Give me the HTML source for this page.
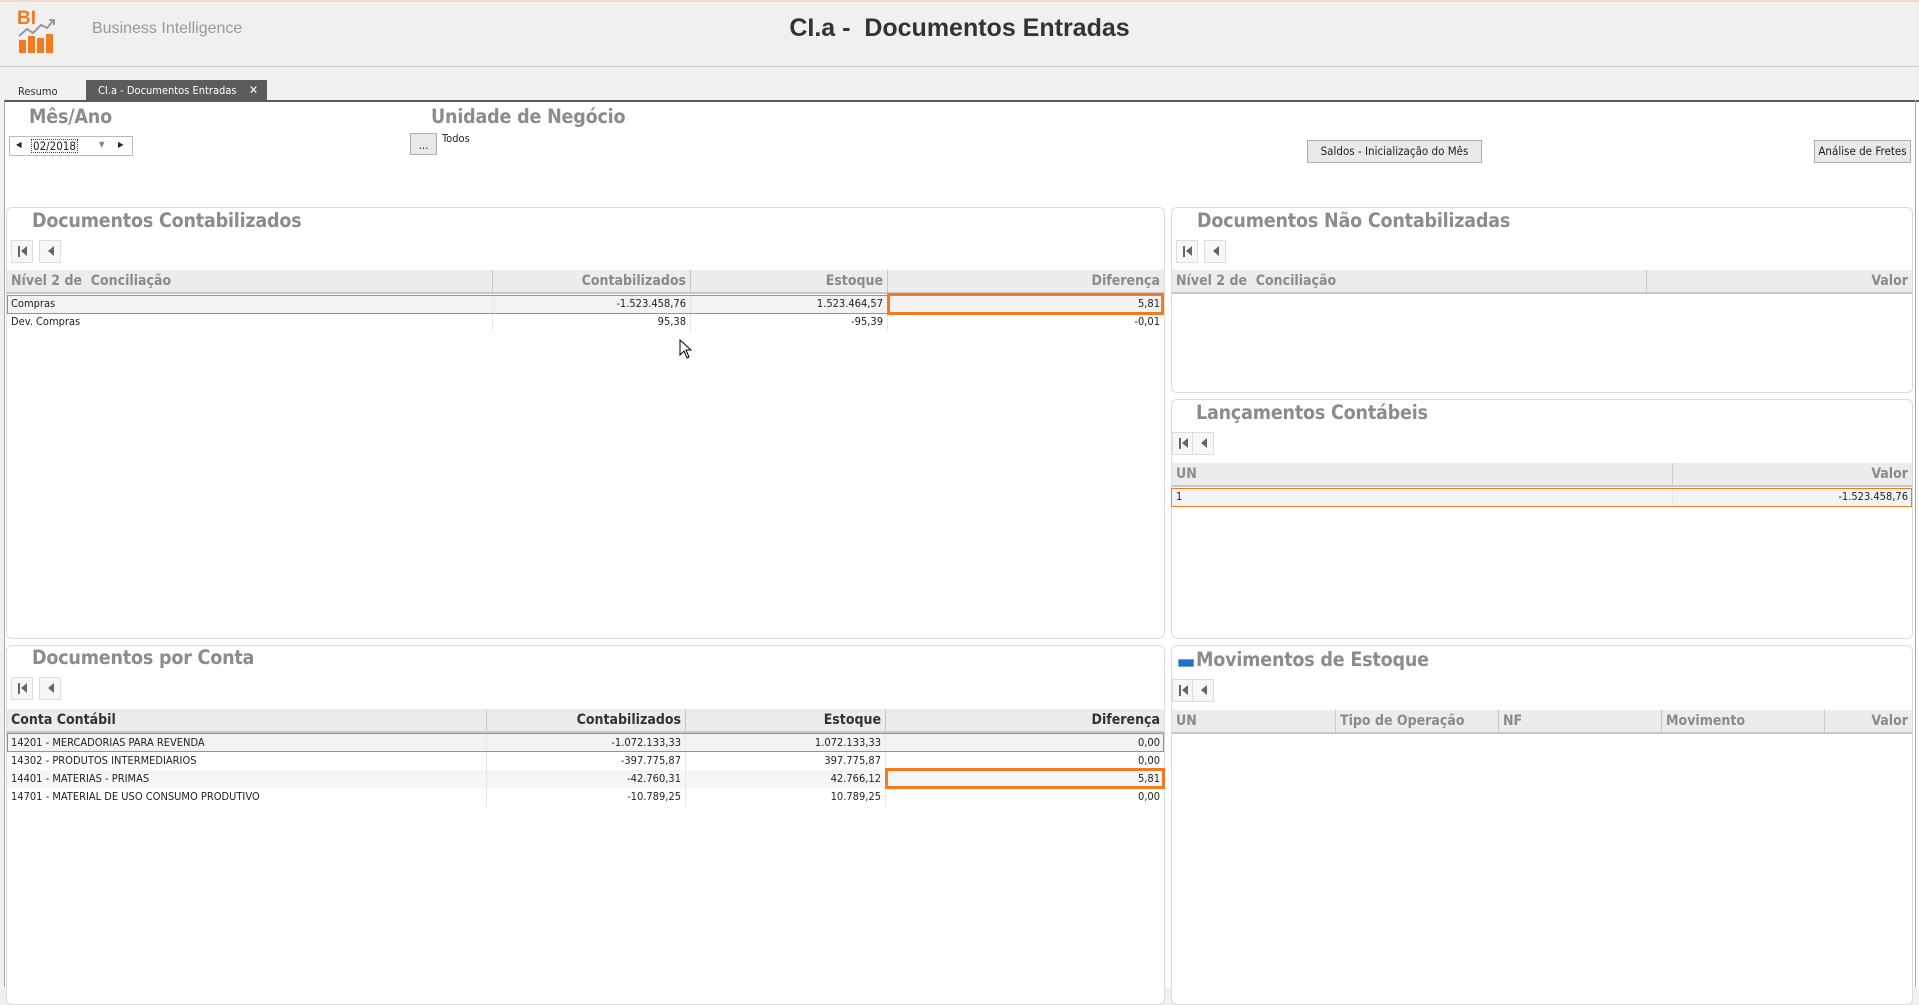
<!DOCTYPE html>
<html><head><meta charset="utf-8"><style>
*{margin:0;padding:0;box-sizing:border-box}
body{width:1919px;height:987px;background:#f0f0f0;position:relative;overflow:hidden;font-family:"Liberation Sans Narrow","DejaVu Sans Condensed","Liberation Sans",sans-serif;color:#222}
.a{position:absolute}
.t{font-weight:bold;color:#8c8c8c;font-size:19.5px;white-space:nowrap;letter-spacing:-0.2px}
.panel{position:absolute;background:#fff;border:1px solid #dcdcdc;border-radius:6px}
.nav{position:absolute;width:22px;height:23px;border:1px solid #ddd;background:#f7f7f7}
.nav .bar{position:absolute;left:6px;top:5px;width:2px;height:11px;background:#666}
.nav .tri{position:absolute;top:5px;width:0;height:0;border-top:5.5px solid transparent;border-bottom:5.5px solid transparent;border-right:6px solid #666}
.hdr{position:absolute;background:#ececec;border-bottom:2px solid #c8c8c8;height:24px;font-weight:bold;font-size:14px;color:#8a8a8a}
.hdr div,.row div{position:absolute;top:0;height:100%;padding:0 4px;white-space:nowrap}
.hdr div{line-height:23px;border-left:1px solid #c8c8c8}
.row{position:absolute;height:18px;font-size:11px;color:#222}
.row div{line-height:18px;border-left:1px solid #e6e6e6}
.r{text-align:right}
.ob{position:absolute;border:2px solid #f47a20}
.btn{position:absolute;background:#e9e9e9;border:1px solid #adadad;font-size:11.5px;text-align:center;color:#222}
</style></head><body>
<div class="a" style="left:0;top:0;width:1919px;height:2px;background:#f8d8c8"></div>
<div class="a" style="left:17px;top:8px;font-weight:bold;color:#f47a20;font-size:19px;font-family:'Liberation Sans',sans-serif">BI</div>
<svg class="a" style="left:17px;top:18px" width="40" height="36" viewBox="0 0 40 36"><path d="M2 18 L10 11 L16 15 L24 7 L30 10 L36 3" stroke="#999" stroke-width="2" fill="none"/><path d="M32 2 L37 2 L37 7" stroke="#999" stroke-width="2" fill="none"/><rect x="2" y="22" width="7" height="13" fill="#f47a20"/><rect x="11" y="18" width="7" height="17" fill="#f47a20"/><rect x="20" y="20" width="7" height="15" fill="#f47a20"/><rect x="29" y="16" width="7" height="19" fill="#f47a20"/></svg>
<div class="a" style="left:92px;top:20px;font-size:16px;color:#999;font-family:'Liberation Sans',sans-serif">Business Intelligence</div>
<div class="a" style="left:0;width:1919px;top:14px;text-align:center;font-weight:bold;font-size:25px;color:#333;font-family:'Liberation Sans',sans-serif">CI.a -&nbsp; Documentos Entradas</div>
<div class="a" style="left:0;top:66px;width:1919px;height:1px;background:#c8c8c8"></div>
<div class="a" style="left:18px;top:85px;font-size:11px;color:#333">Resumo</div>
<div class="a" style="left:86px;top:80px;width:181px;height:21px;background:#5c5c5c;color:#fff;font-size:11px;line-height:21px;padding-left:12px">CI.a - Documentos Entradas<span style="position:absolute;right:9px;font-size:12px">✕</span></div>
<div class="a" style="left:4px;top:100px;width:1915px;height:887px;background:#fff;border-top:2px solid #5c5c5c;border-left:1px solid #aaa"></div>
<div class="a" style="left:1915px;top:100px;width:1px;height:887px;background:#aaa"></div>
<div class="a t" style="left:29px;top:105px">Mês/Ano</div>
<div class="a" style="left:9px;top:136px;width:124px;height:20px;border:1px solid #bbb;background:#fff;font-size:11.5px">
 <span class="a" style="left:6px;top:3px;font-size:8px">◀</span>
 <span class="a" style="left:21px;top:2px;width:47px;height:14px;border:1px dotted #444;text-align:center;line-height:13px">02/2018</span>
 <span class="a" style="left:89px;top:3px;font-size:8px;color:#888">▼</span>
 <span class="a" style="left:108px;top:3px;font-size:8px">▶</span>
</div>
<div class="a t" style="left:431px;top:105px">Unidade de Negócio</div>
<div class="btn" style="left:410px;top:133px;width:27px;height:22px;line-height:22px">...</div>
<div class="a" style="left:442px;top:132px;font-size:11px">Todos</div>
<div class="btn" style="left:1307px;top:140px;width:175px;height:23px;line-height:21px">Saldos - Inicialização do Mês</div>
<div class="btn" style="left:1814px;top:140px;width:97px;height:23px;line-height:21px">Análise de Fretes</div>

<div class="panel" style="left:6px;top:207px;width:1159px;height:432px"></div>
<div class="a t" style="left:32px;top:209px">Documentos Contabilizados</div>
<div class="nav" style="left:11px;top:240px"><span class="bar"></span><span class="tri" style="left:9px"></span></div>
<div class="nav" style="left:39px;top:240px"><span class="tri" style="left:8px"></span></div>
<div class="hdr" style="left:7px;top:270px;width:1157px">
 <div style="left:0;width:485px;border-left:0">Nível 2 de&nbsp; Conciliação</div>
 <div class="r" style="left:485px;width:198px">Contabilizados</div>
 <div class="r" style="left:683px;width:197px">Estoque</div>
 <div class="r" style="left:880px;width:277px">Diferença</div>
</div>
<div class="row" style="left:7px;top:295px;width:1157px;background:#f3f3f3">
 <div style="left:0;width:485px;border-left:0">Compras</div>
 <div class="r" style="left:485px;width:198px">-1.523.458,76</div>
 <div class="r" style="left:683px;width:197px">1.523.464,57</div>
 <div class="r" style="left:880px;width:277px">5,81</div>
</div>
<div class="row" style="left:7px;top:313px;width:1157px">
 <div style="left:0;width:485px;border-left:0">Dev. Compras</div>
 <div class="r" style="left:485px;width:198px">95,38</div>
 <div class="r" style="left:683px;width:197px">-95,39</div>
 <div class="r" style="left:880px;width:277px">-0,01</div>
</div>
<div class="ob" style="left:7px;top:295px;width:882px;height:19px;border-width:1px"></div>
<div class="ob" style="left:887px;top:293px;width:277px;height:22px;border-width:3px"></div>
<svg class="a" style="left:679px;top:339px" width="14" height="20" viewBox="0 0 14 20"><path d="M1 1 L1 16 L5 12 L8 19 L10 18 L7 11 L12 11 Z" fill="#fff" stroke="#000" stroke-width="1"/></svg>

<div class="panel" style="left:1171px;top:207px;width:742px;height:186px"></div>
<div class="a t" style="left:1197px;top:209px">Documentos Não Contabilizadas</div>
<div class="nav" style="left:1176px;top:240px"><span class="bar"></span><span class="tri" style="left:9px"></span></div>
<div class="nav" style="left:1204px;top:240px"><span class="tri" style="left:8px"></span></div>
<div class="hdr" style="left:1172px;top:270px;width:740px">
 <div style="left:0;width:474px;border-left:0">Nível 2 de&nbsp; Conciliação</div>
 <div class="r" style="left:474px;width:266px">Valor</div>
</div>

<div class="panel" style="left:1171px;top:399px;width:742px;height:240px"></div>
<div class="a t" style="left:1196px;top:401px">Lançamentos Contábeis</div>
<div class="nav" style="left:1172px;top:432px"><span class="bar"></span><span class="tri" style="left:9px"></span></div>
<div class="nav" style="left:1192px;top:432px"><span class="tri" style="left:8px"></span></div>
<div class="hdr" style="left:1172px;top:463px;width:740px">
 <div style="left:0;width:500px;border-left:0">UN</div>
 <div class="r" style="left:500px;width:240px">Valor</div>
</div>
<div class="row" style="left:1172px;top:488px;width:740px;background:#f3f3f3">
 <div style="left:0;width:500px;border-left:0">1</div>
 <div class="r" style="left:500px;width:240px">-1.523.458,76</div>
</div>
<div class="ob" style="left:1171px;top:488px;width:741px;height:19px;border-width:1px"></div>

<div class="panel" style="left:6px;top:645px;width:1159px;height:360px"></div>
<div class="a t" style="left:32px;top:646px">Documentos por Conta</div>
<div class="nav" style="left:11px;top:677px"><span class="bar"></span><span class="tri" style="left:9px"></span></div>
<div class="nav" style="left:39px;top:677px"><span class="tri" style="left:8px"></span></div>
<div class="hdr" style="left:7px;top:709px;width:1157px;color:#333">
 <div style="left:0;width:479px;border-left:0">Conta Contábil</div>
 <div class="r" style="left:479px;width:199px">Contabilizados</div>
 <div class="r" style="left:678px;width:200px">Estoque</div>
 <div class="r" style="left:878px;width:279px">Diferença</div>
</div>
<div class="row" style="left:7px;top:734px;width:1157px;background:#f3f3f3">
 <div style="left:0;width:479px;border-left:0">14201 - MERCADORIAS PARA REVENDA</div>
 <div class="r" style="left:479px;width:199px">-1.072.133,33</div>
 <div class="r" style="left:678px;width:200px">1.072.133,33</div>
 <div class="r" style="left:878px;width:279px">0,00</div>
</div>
<div class="row" style="left:7px;top:752px;width:1157px">
 <div style="left:0;width:479px;border-left:0">14302 - PRODUTOS INTERMEDIARIOS</div>
 <div class="r" style="left:479px;width:199px">-397.775,87</div>
 <div class="r" style="left:678px;width:200px">397.775,87</div>
 <div class="r" style="left:878px;width:279px">0,00</div>
</div>
<div class="row" style="left:7px;top:770px;width:1157px;background:#f6f6f6">
 <div style="left:0;width:479px;border-left:0">14401 - MATERIAS - PRIMAS</div>
 <div class="r" style="left:479px;width:199px">-42.760,31</div>
 <div class="r" style="left:678px;width:200px">42.766,12</div>
 <div class="r" style="left:878px;width:279px">5,81</div>
</div>
<div class="row" style="left:7px;top:788px;width:1157px">
 <div style="left:0;width:479px;border-left:0">14701 - MATERIAL DE USO CONSUMO PRODUTIVO</div>
 <div class="r" style="left:479px;width:199px">-10.789,25</div>
 <div class="r" style="left:678px;width:200px">10.789,25</div>
 <div class="r" style="left:878px;width:279px">0,00</div>
</div>
<div class="ob" style="left:7px;top:733px;width:1157px;height:19px;border-width:1px"></div>
<div class="ob" style="left:885px;top:768px;width:280px;height:21px;border-width:3px"></div>

<div class="panel" style="left:1171px;top:645px;width:742px;height:360px"></div>
<div class="a" style="left:1178px;top:659px;width:16px;height:8px;background:#1e6fd0;border:1px solid #7aa"></div>
<div class="a t" style="left:1196px;top:648px">Movimentos de Estoque</div>
<div class="nav" style="left:1172px;top:679px"><span class="bar"></span><span class="tri" style="left:9px"></span></div>
<div class="nav" style="left:1192px;top:679px"><span class="tri" style="left:8px"></span></div>
<div class="hdr" style="left:1172px;top:710px;width:740px">
 <div style="left:0;width:163px;border-left:0">UN</div>
 <div style="left:163px;width:163px">Tipo de Operação</div>
 <div style="left:326px;width:163px">NF</div>
 <div style="left:489px;width:163px">Movimento</div>
 <div class="r" style="left:652px;width:88px">Valor</div>
</div>
</body></html>
